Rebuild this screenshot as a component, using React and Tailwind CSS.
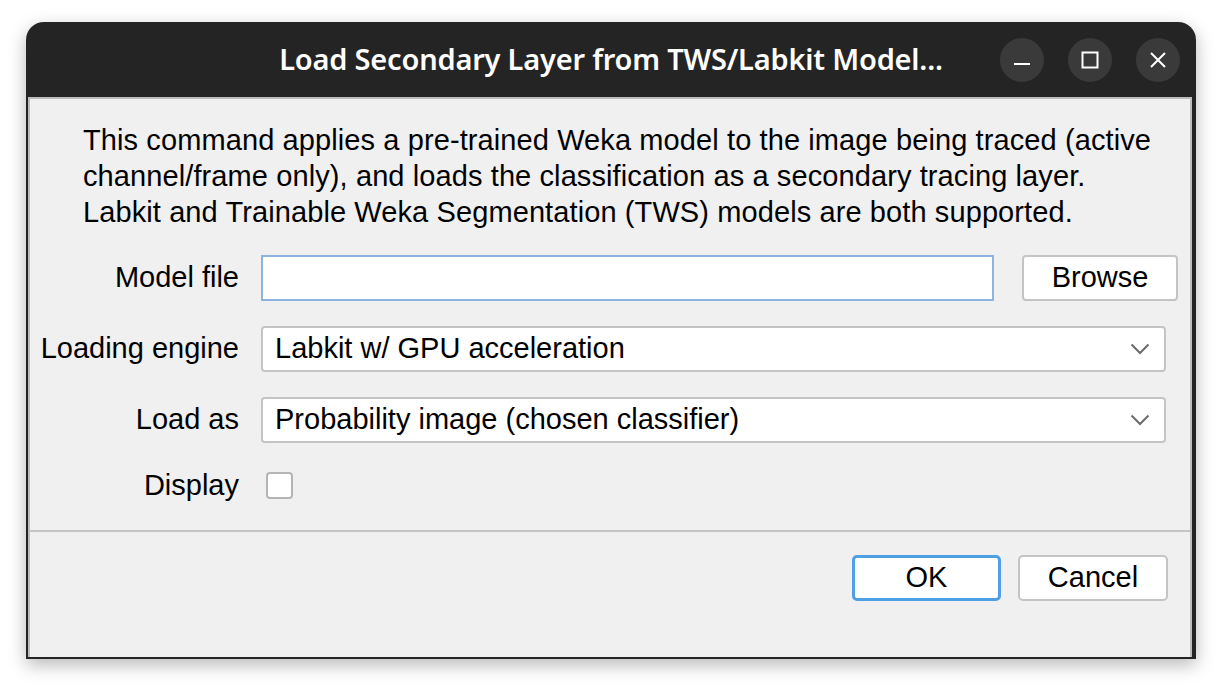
import React from 'react';

const Chevron = () => (
  <svg width="20" height="12" viewBox="0 0 20 12" className="shrink-0">
    <path d="M1.5 1.5 L10 10 L18.5 1.5" fill="none" stroke="#6b6b6b" strokeWidth="2" />
  </svg>
);

const WinButton = ({ children }) => (
  <div className="w-[44px] h-[44px] rounded-full bg-[#3a3a3a] flex items-center justify-center">
    {children}
  </div>
);

const Select = ({ value }) => (
  <div className="flex-1 h-[46px] mr-[24px] flex items-center justify-between pl-[12px] pr-[14px] bg-white border-2 border-[#c4c4c4] rounded-[4px]">
    <span>{value}</span>
    <Chevron />
  </div>
);

const Label = ({ children }) => (
  <div className="w-[209px] shrink-0 text-right">{children}</div>
);

export default function App() {
  return (
    <div className="w-[1221px] h-[691px] bg-white overflow-hidden pt-[22px] pl-[26px]">
      {/* Dialog window */}
      <div className="w-[1170px] h-[637px] rounded-t-[18px] bg-[#242424] flex flex-col overflow-hidden shadow-[0_6px_18px_rgba(0,0,0,0.28)]">
        {/* Title bar */}
        <div className="h-[75px] shrink-0 grid grid-cols-[1fr_auto_1fr] items-center">
          <div />
          <div className="text-white text-[29px] font-semibold font-['Noto_Sans',sans-serif] tracking-[-0.2px] -mt-[2px]">
            Load Secondary Layer from TWS/Labkit Model...
          </div>
          <div className="flex justify-end gap-[24px] pr-[16px]">
            <WinButton>
              <svg width="18" height="18" viewBox="0 0 18 18"><path d="M1 13 H17" stroke="#fff" strokeWidth="2" /></svg>
            </WinButton>
            <WinButton>
              <svg width="18" height="18" viewBox="0 0 18 18"><rect x="1.5" y="1.5" width="15" height="15" fill="none" stroke="#fff" strokeWidth="2" /></svg>
            </WinButton>
            <WinButton>
              <svg width="18" height="18" viewBox="0 0 18 18"><path d="M2 2 L16 16 M16 2 L2 16" stroke="#fff" strokeWidth="2" /></svg>
            </WinButton>
          </div>
        </div>

        {/* Content */}
        <div className="flex-1 ml-[2px] mr-[4px] mb-[2px] bg-[#f0f0f0] border-2 border-b-0 border-[#bdbdbd] flex flex-col font-['Liberation_Sans',Arial,sans-serif] text-[29px] text-black">
          <div className="pl-[53px] pt-[23px] leading-[36px] tracking-[0.1px]">
            <p>This command applies a pre-trained Weka model to the image being traced (active</p>
            <p>channel/frame only), and loads the classification as a secondary tracing layer.</p>
            <p>Labkit and Trainable Weka Segmentation (TWS) models are both supported.</p>
          </div>

          <div className="flex flex-col gap-[25px] mt-[25px]">
            <div className="flex items-center gap-[22px]">
              <Label>Model file</Label>
              <div className="w-[733px] h-[46px] bg-white border-2 border-[#8db4de]" />
              <div className="ml-[6px] w-[156px] h-[46px] bg-white border-2 border-[#c4c4c4] rounded-[4px] flex items-center justify-center">
                Browse
              </div>
            </div>
            <div className="flex items-center gap-[22px]">
              <Label>Loading engine</Label>
              <Select value="Labkit w/ GPU acceleration" />
            </div>
            <div className="flex items-center gap-[22px]">
              <Label>Load as</Label>
              <Select value="Probability image (chosen classifier)" />
            </div>
            <div className="flex items-center gap-[27px] -mt-[4px]">
              <Label>Display</Label>
              <div className="w-[27px] h-[27px] bg-white border-2 border-[#b4b4b4] rounded-[4px]" />
            </div>
          </div>

          <div className="mt-[22px] border-t-2 border-[#c4c4c4]" />

          <div className="flex justify-end gap-[17px] pr-[22px] pt-[23px]">
            <div className="w-[149px] h-[46px] bg-white border-[3px] border-[#4e9fe6] rounded-[5px] flex items-center justify-center">
              OK
            </div>
            <div className="w-[150px] h-[46px] bg-white border-2 border-[#c4c4c4] rounded-[5px] flex items-center justify-center">
              Cancel
            </div>
          </div>
        </div>
      </div>
    </div>
  );
}
